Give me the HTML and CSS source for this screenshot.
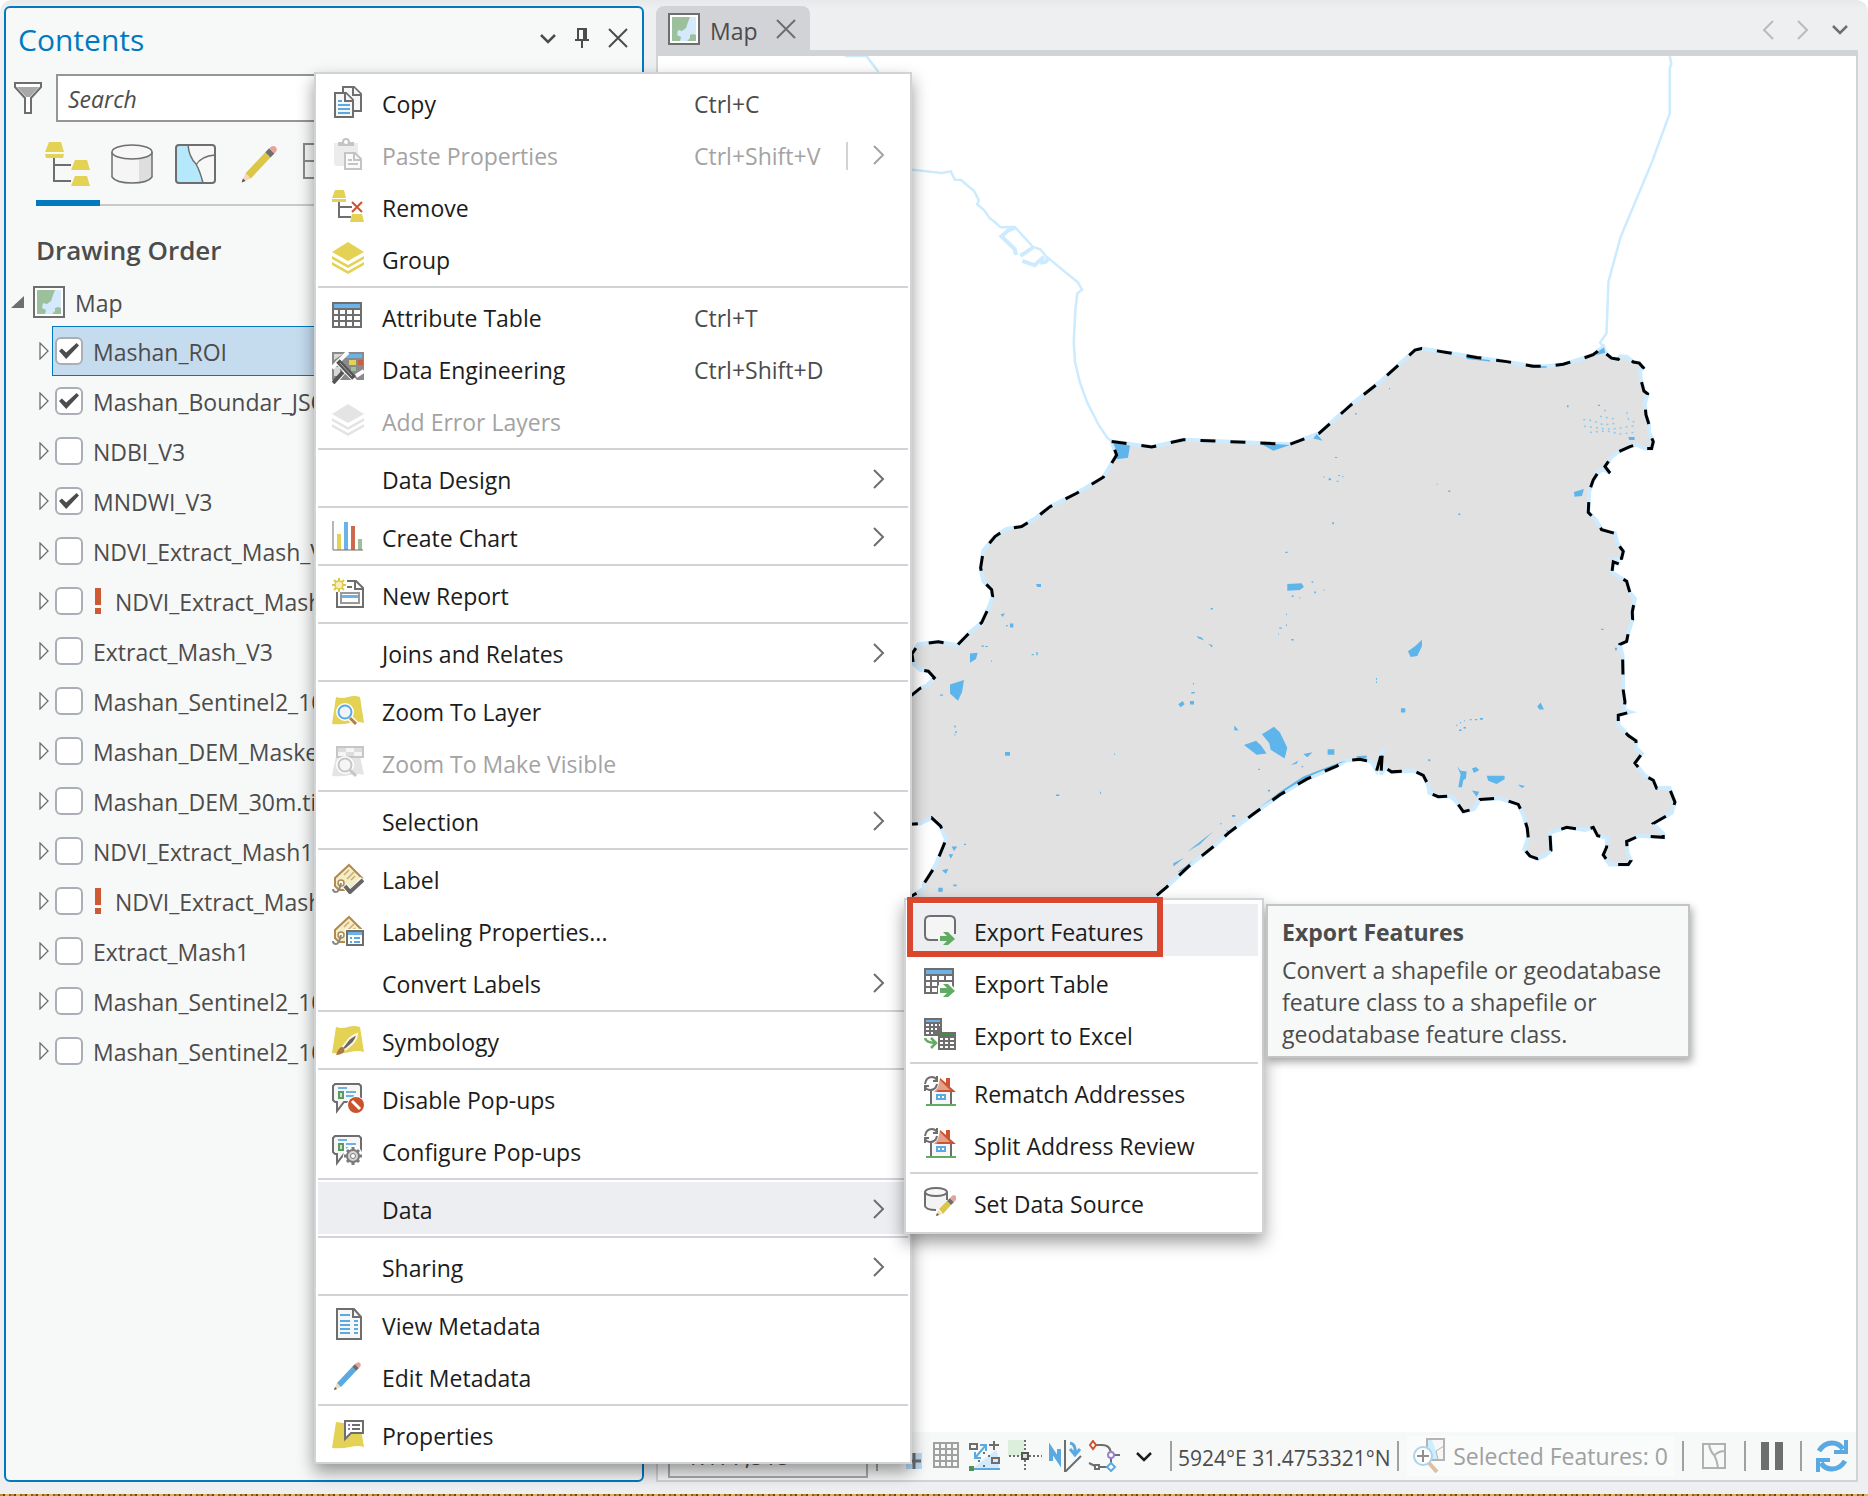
FILE: index.html
```html
<!DOCTYPE html>
<html lang="en">
<head>
<meta charset="utf-8">
<title>Map - Contents</title>
<link rel="stylesheet" href="styles.css">
</head>
<body>
<svg class="sprite" aria-hidden="true">
  <symbol id="chev-right" viewBox="0 0 16 24"><path d="M2 4L11 13L2 22" fill="none" stroke="currentColor" stroke-width="2"/></symbol>
  <symbol id="chev-left" viewBox="0 0 16 24"><path d="M11 4L2 13L11 22" fill="none" stroke="currentColor" stroke-width="2"/></symbol>
  <symbol id="chev-down" viewBox="0 0 20 20"><path d="M3 7L10 14L17 7" fill="none" stroke="currentColor" stroke-width="2.500"/></symbol>
  <symbol id="close" viewBox="0 0 24 24"><path d="M3 3L21 21M21 3L3 21" fill="none" stroke="currentColor" stroke-width="2"/></symbol>
  <symbol id="pin" viewBox="0 0 20 24"><path d="M6 13V3H14V13M3 14H17M10 14V22M12 3V13" fill="none" stroke="currentColor" stroke-width="2"/></symbol>
  <symbol id="map" viewBox="0 0 32 32"><path d="M1 1H31V31H1Z" fill="#fff" stroke="#6e6e6e" stroke-width="2"/><path d="M4 4H28V28H4Z" fill="#9bc09b"/><path d="M22 4H28V22L25 21L22 22V25L19 28H12L13 24L9 22L10 17L14 18L18 15L20 9Z" fill="#d4e9fb"/></symbol>
  <symbol id="expander" viewBox="0 0 12 18"><path d="M1 1V17L9 9Z" fill="#fff" stroke="#6e6e6e" stroke-width="1.3"/></symbol>
  <symbol id="copy" viewBox="0 0 32 32"><g fill="#f7f7f7" stroke="#6e6e6e" stroke-width="2"><path d="M11 1H22L29 8V25H11Z"/><path d="M21 1V9H29"/><path d="M3 7H14L21 14V31H3Z"/><path d="M13 7V15H21"/></g><path d="M6 15H10M6 19H18M6 23H18M6 27H18" stroke="#5aa9e0" stroke-width="2"/></symbol>
  <symbol id="paste" viewBox="0 0 32 32"><path d="M2 5H26V28H4L2 26Z" fill="#ececec"/><path d="M6 4H22V8H6Z" fill="#c4c4c4"/><circle cx="14" cy="4" r="3" fill="#fff" stroke="#c4c4c4" stroke-width="2"/><path d="M13 15H23L29 21V31H13Z" fill="#fafafa" stroke="#c4c4c4" stroke-width="2"/><path d="M22 15V22H29M16 22H20M16 26H26" fill="none" stroke="#c4c4c4" stroke-width="2"/></symbol>
  <symbol id="remove" viewBox="0 0 32 32"><path d="M3 0H12L14 8H0ZM0 9H14V12H0ZM20 24H30L32 32H18Z" fill="#e4d255"/><path d="M7 12V27H19M7 17H20" fill="none" stroke="#6e6e6e" stroke-width="2"/><path d="M20 12L30 22M30 12L20 22" stroke="#cd5430" stroke-width="2"/></symbol>
  <symbol id="layers" viewBox="0 0 32 32"><path d="M16 0L32 10L16 19L0 10ZM0 14L16 23L32 14V17L16 26L0 17ZM0 20L16 29L32 20V23L16 32L0 23Z" fill="currentColor"/></symbol>
  <symbol id="table" viewBox="0 0 32 32"><path d="M0 2H30V28H0Z" fill="#6e6e6e"/><path d="M2 4H28V8H2Z" fill="#6cb2e6"/><path d="M2 10h4v4H2zM8 10h5v4H8zM15 10h5v4h-5zM22 10h6v4h-6zM2 16h4v4H2zM8 16h5v4H8zM15 16h5v4h-5zM22 16h6v4h-6zM2 22h4v4H2zM8 22h5v4H8zM15 22h5v4h-5zM22 22h6v4h-6z" fill="#fff"/></symbol>
  <symbol id="engineering" viewBox="0 0 32 32"><path d="M0 0H32V28H0Z" fill="#8a8a8a"/><path d="M2 2H11L2 8Z" fill="#d8d8d8"/><path d="M13 2H30V6H10Z" fill="#6cb2e6"/><path d="M17 8H24V13H17Z" fill="#e4d255"/><path d="M26 8H31V13H26Z" fill="#cd5f40"/><path d="M19 15H24V19H19Z" fill="#9bc09b"/><path d="M2 15H8V24H2Z" fill="#d8d8d8"/><path d="M16 0L0 16M4 9L24 30M24 24L32 19M2 32L12 20" stroke="#fff" stroke-width="4"/><path d="M6 9L22 26" stroke="#555" stroke-width="5"/><path d="M8 11L20 24" stroke="#aaa" stroke-width="1"/><path d="M1 31L11 20" stroke="#555" stroke-width="4"/></symbol>
  <symbol id="chart" viewBox="0 0 32 32"><path d="M5 14h4v16H5z" fill="#e4d255"/><path d="M12 2h4v28h-4z" fill="#6cb2e6"/><path d="M19 6h4v24h-4z" fill="#cd6a4e"/><path d="M26 19h4v11h-4z" fill="#9bc09b"/><path d="M1 1V30H31" fill="none" stroke="#6e6e6e"/></symbol>
  <symbol id="report" viewBox="0 0 32 32"><path d="M5 14V29H31V10L24 3H15" fill="#fff" stroke="#6e6e6e" stroke-width="2"/><path d="M23 3V11H31M15 9H20" fill="none" stroke="#6e6e6e" stroke-width="2"/><path d="M9 15H27V25H9Z" fill="#fff" stroke="#999" stroke-width="2"/><path d="M10 17H26V20H10Z" fill="#6cb2e6"/><path d="M7 0V14M0 7H14M2 2L12 12M12 2L2 12" stroke="#dcc647" stroke-width="2"/><circle cx="7" cy="7" r="4" fill="#f7efb9" stroke="#dcc647" stroke-width="1.5"/></symbol>
  <symbol id="zoomlayer" viewBox="0 0 32 32"><path d="M4 3Q10 5 16 3T28 3L32 29Q26 27 18 29T0 30Z" fill="#e4d255"/><path d="M18 24L25 31" stroke="#fff" stroke-width="6"/><circle cx="13" cy="18" r="9" fill="#fff"/><circle cx="13" cy="18" r="6.500" fill="#eef4f9" stroke="#5aa9e0" stroke-width="2"/><path d="M18 24L24 30" stroke="#b07d4b" stroke-width="3"/></symbol>
  <symbol id="zoomvisible" viewBox="0 0 32 32"><path d="M4 10L28 10L32 29Q26 27 18 29T0 30Z" fill="#e4e4e4"/><path d="M5 1H31V11H5Z" fill="#f5f5f5" stroke="#c6c6c6" stroke-width="2"/><path d="M6 2h8v4H6zM22 2h8v4h-8zM14 6h8v4h-8z" fill="#ddd"/><circle cx="13" cy="19" r="9" fill="#fff"/><circle cx="13" cy="19" r="6.500" fill="#f5f5f5" stroke="#c6c6c6" stroke-width="2"/><path d="M18 24L24 30" stroke="#c6c6c6" stroke-width="3"/></symbol>
  <symbol id="tag" viewBox="0 0 32 32"><path d="M17 3L30 16L17 28H7L3 24V16Z" fill="#f5edc6" stroke="#b08a50" stroke-width="2"/><path d="M12 13L17 8M15 17L22 10M19 18L23 14" stroke="#cba971" stroke-width="1.500"/><circle cx="9" cy="21" r="3" fill="#fff" stroke="#b08a50" stroke-width="1.500"/><path d="M9 21Q7 30 4 30Q1 30 1 27" fill="none" stroke="#888" stroke-width="2"/></symbol>
  <symbol id="label" viewBox="0 0 32 32"><use href="#tag"/><path d="M13 24L18 30L31 17" fill="none" stroke="#fff" stroke-width="6"/><path d="M13 24L18 30L31 18" fill="none" stroke="#666" stroke-width="4"/></symbol>
  <symbol id="labelprops" viewBox="0 0 32 32"><use href="#tag"/><path d="M13 15H32V32H13Z" fill="#fff"/><path d="M15 17H31V31H15Z" fill="#fff" stroke="#6e6e6e" stroke-width="2"/><path d="M16 18H30V21H16Z" fill="#6cb2e6"/><path d="M18 24H20M22 24H28M18 28H20M22 28H28" stroke="#5aa9e0" stroke-width="2"/></symbol>
  <symbol id="symbology" viewBox="0 0 32 32"><path d="M4 3Q10 5 16 3T28 3L32 28Q26 26 18 28T0 29Z" fill="#e4d255"/><path d="M10 24L17 15Q22 11 25 10Q25 14 21 19L13 26Z" fill="#666" stroke="#fbf6da" stroke-width="2"/><path d="M4 31Q7 22 11 23Q14 26 11 29Q8 31 4 31Z" fill="#a97748"/></symbol>
  <symbol id="bubble" viewBox="0 0 32 32"><path d="M3 2H27L29 4V20H12L5 29V20H3L1 18V4Z" fill="#f7f7f7" stroke="#6e6e6e" stroke-width="2"/><path d="M6 6H15M14 10H24M14 14H22" stroke="#6cb2e6" stroke-width="2"/><path d="M6 9h6v8H6z" fill="#5b9a5b"/><path d="M8 11h2v4H8z" fill="#cfe3cf"/></symbol>
  <symbol id="popoff" viewBox="0 0 32 32"><use href="#bubble"/><circle cx="24" cy="23" r="9" fill="#fff"/><circle cx="24" cy="23" r="8" fill="#c9532d"/><path d="M20 19L28 27" stroke="#fff" stroke-width="3"/></symbol>
  <symbol id="popset" viewBox="0 0 32 32"><use href="#bubble"/><circle cx="21" cy="22" r="10" fill="#fff"/><path d="M21 13V31M12 22H30M15 16L27 28M27 16L15 28" stroke="#7b7b7b" stroke-width="3"/><circle cx="21" cy="22" r="6" fill="#d5d5d5" stroke="#7b7b7b" stroke-width="2"/><circle cx="21" cy="22" r="2.500" fill="#fff" stroke="#7b7b7b"/></symbol>
  <symbol id="viewmeta" viewBox="0 0 32 32"><path d="M5 1H22L29 9V31H5Z" fill="#f7f7f7" stroke="#6e6e6e" stroke-width="2"/><path d="M21 1V9H29" fill="none" stroke="#6e6e6e" stroke-width="2"/><path d="M8 7H18M8 13H18M22 13H26M8 17H18M22 17H26M8 21H18M22 21H26M8 25H18M22 25H26" stroke="#5aa9e0" stroke-width="2"/></symbol>
  <symbol id="pencil" viewBox="0 0 32 32"><path d="M2 30L5 23L9 27Z" fill="#f3d9b8"/><path d="M2 30L3 27L5 29Z" fill="#555"/><path d="M5 23L20 7L24 11L9 27Z" fill="currentColor"/><path d="M20 7L23 4L27 8L24 11Z" fill="#6e6e6e"/><path d="M23 4Q26 1 28 3T27 8Z" fill="#e3a497"/></symbol>
  <symbol id="props" viewBox="0 0 32 32"><path d="M4 4L12 5H28L32 29Q26 27 18 29T0 30Z" fill="#e4d255"/><path d="M13 3H31V15H19L13 21Z" fill="#fff" stroke="#6e6e6e" stroke-width="2"/><path d="M20 7H28M20 11H28" stroke="#6e6e6e" stroke-width="2"/><path d="M16 7H18M16 11H18" stroke="#8a75c9" stroke-width="2"/></symbol>
  <symbol id="arrow" viewBox="0 0 32 32"><path d="M14 20L18 16H25L32 24V32H14Z" fill="#fff"/><path d="M16 22H23L19 18H24L31 25L24 31H19L23 27H16Z" fill="#62ab62"/></symbol>
  <symbol id="exportfeat" viewBox="0 0 32 32"><path d="M14 26H6Q1 26 1 21V7Q1 2 6 2H26Q31 2 31 7V20" fill="#f5f5f5" stroke="#6e6e6e" stroke-width="2"/><path d="M16 22H23L19 18H24L31 25L24 31H19L23 27H16Z" fill="#62ab62"/></symbol>
  <symbol id="exporttable" viewBox="0 0 32 32"><use href="#table"/><use href="#arrow"/></symbol>
  <symbol id="excel" viewBox="0 0 32 32"><path d="M0 0H18V18H0ZM14 14H32V32H14Z" fill="#6e6e6e"/><path d="M2 2H16V4H2Z" fill="#6cb2e6"/><path d="M16 16H30V18H16Z" fill="#3f8f3f"/><path d="M2 6h3v2H2zM7 6h2v2H7zM11 6h2v2h-2zM15 6h1v2h-1zM2 10h3v2H2zM7 10h2v2H7zM11 10h2v2h-2zM2 14h3v2H2zM7 14h2v2H7zM16 20h3v2h-3zM21 20h3v2h-3zM26 20h4v2h-4zM16 24h3v2h-3zM21 24h3v2h-3zM26 24h4v2h-4zM16 28h3v2h-3zM21 28h3v2h-3zM26 28h4v2h-4z" fill="#fff"/><path d="M1 20Q2 25 12 25M7 20L12 25L7 30" fill="none" stroke="#62ab62" stroke-width="2.500"/></symbol>
  <symbol id="house" viewBox="0 0 32 32"><path d="M7 14V29M27 14V29" stroke="#6e6e6e" stroke-width="2"/><path d="M8 14H26V28H8Z" fill="#f7f7f7"/><path d="M2 29H32" stroke="#62ab62" stroke-width="2"/><path d="M12 18H22V24H12Z" fill="#5aa9e0"/><path d="M14 20h2v2h-2zM18 20h2v2h-2z" fill="#fff"/><path d="M16 2L31 16H10L14 11Z" fill="#e3a08c"/><path d="M16 2L22 7V2H26V11L32 16H12L14 14H26L16 4Z" fill="#cd5430"/><path d="M1 8Q2 1 8 1Q11 1 13 4M13 0V5H9M13 8Q12 14 6 14Q3 14 1 11M1 15V10H5" fill="none" stroke="#6e6e6e" stroke-width="2"/></symbol>
  <symbol id="datasource" viewBox="0 0 32 32"><path d="M1 6V20Q1 24 12 24L23 18V6Z" fill="#f3f3f3"/><path d="M1 6V20Q2 24 12 24M23 6V14" fill="none" stroke="#6e6e6e" stroke-width="2"/><ellipse cx="12" cy="6" rx="11" ry="4" fill="#f7f7f7" stroke="#6e6e6e" stroke-width="2"/><path d="M12 30L14 24L18 28Z" fill="#f3d9b8"/><path d="M12 30L13 27L15 29Z" fill="#555"/><path d="M15 23L23 15L27 19L19 28Z" fill="#dcc647"/><path d="M23 15L26 12L30 16L27 19Z" fill="#6e6e6e"/><path d="M26 12L29 9L32 10V14L30 16Z" fill="#e3a497"/></symbol>
  <symbol id="refresh" viewBox="0 0 32 32"><path d="M3 11Q8 3 16 3Q23 3 27 9M29 21Q24 29 16 29Q9 29 5 23" fill="none" stroke="#5aa9e0" stroke-width="5"/><path d="M32 0V14H18V10H28V0ZM0 32V18H14V22H4V32Z" fill="#5aa9e0"/></symbol>
</svg>

<div class="app">
  <section class="contents" aria-label="Contents">
    <header class="contents-head">
      <h1>Contents</h1>
      <button class="tool" aria-label="Options"><svg width="20" height="20"><use href="#chev-down"/></svg></button>
      <button class="tool" aria-label="Pin"><svg width="20" height="24"><use href="#pin"/></svg></button>
      <button class="tool" aria-label="Close"><svg width="24" height="24"><use href="#close"/></svg></button>
    </header>
    <div class="search">
      <svg width="28" height="34" viewBox="0 0 28 34"><path d="M1 2H27V6L17 17V32H11V17L1 6Z" fill="#fff" stroke="#6e6e6e" stroke-width="2"/><path d="M3 6H25L16 16H12Z" fill="#a8a8a8"/></svg>
      <input type="text" placeholder="Search" aria-label="Search">
    </div>
    <nav class="views">
      <button class="view active" aria-label="List by drawing order"><svg width="46" height="46" viewBox="0 0 46 46"><path d="M4 1H16L19 11H0ZM0 13H19L18 17H1ZM30 19H42L45 29H26ZM30 35H42L45 45H26Z" fill="#e4d255"/><path d="M9 17V40H26M9 24H26" fill="none" stroke="#6e6e6e" stroke-width="2"/></svg></button>
      <button class="view" aria-label="List by source"><svg width="42" height="42" viewBox="0 0 42 42"><path d="M1 9V34Q5 40 21 40T41 34V9Z" fill="#f5f5f5"/><path d="M28 14L41 9V34Q38 38 28 39Z" fill="#dedede"/><path d="M1 9V34Q5 40 21 40T41 34V9" fill="none" stroke="#6e6e6e" stroke-width="1.500"/><ellipse cx="21" cy="9" rx="20" ry="7" fill="#f7f7f7" stroke="#6e6e6e" stroke-width="1.500"/></svg></button>
      <button class="view" aria-label="List by selection"><svg width="42" height="42" viewBox="0 0 42 42"><rect x="1" y="2" width="39" height="38" rx="3" fill="#f7f7f7"/><path d="M3 2H13Q14 14 21 21Q25 28 28 40H3L1 38V4Z" fill="#b4e8fa"/><path d="M13 2Q14 14 21 21Q25 28 28 40M21 22Q26 13 40 12" fill="none" stroke="#6e6e6e" stroke-width="1.500"/><rect x="1" y="2" width="39" height="38" rx="3" fill="none" stroke="#6e6e6e" stroke-width="2"/></svg></button>
      <button class="view gold" aria-label="List by editing"><svg width="42" height="42"><use href="#pencil"/></svg></button>
      <button class="view" aria-label="List by snapping"><svg width="42" height="42" viewBox="0 0 42 42"><path d="M1 1H37V35H1ZM1 18H37M19 1V35" fill="none" stroke="#8a8a8a" stroke-width="2"/></svg></button>
    </nav>
    <h2>Drawing Order</h2>
    <div class="root"><svg width="14" height="14" viewBox="0 0 14 14"><path d="M13 1V13H0Z" fill="#6e6e6e"/></svg><svg width="32" height="32"><use href="#map"/></svg><span>Map</span></div>
    <ul class="layers">
      <li><svg class="exp"><use href="#expander"/></svg><label class="layer selected"><input type="checkbox" checked><span>Mashan_ROI</span></label></li>
      <li><svg class="exp"><use href="#expander"/></svg><label class="layer"><input type="checkbox" checked><span>Mashan_Boundar_JSON</span></label></li>
      <li><svg class="exp"><use href="#expander"/></svg><label class="layer"><input type="checkbox"><span>NDBI_V3</span></label></li>
      <li><svg class="exp"><use href="#expander"/></svg><label class="layer"><input type="checkbox" checked><span>MNDWI_V3</span></label></li>
      <li><svg class="exp"><use href="#expander"/></svg><label class="layer"><input type="checkbox"><span>NDVI_Extract_Mash_V3</span></label></li>
      <li><svg class="exp"><use href="#expander"/></svg><label class="layer"><input type="checkbox"><i class="bang"></i><span>NDVI_Extract_Mash</span></label></li>
      <li><svg class="exp"><use href="#expander"/></svg><label class="layer"><input type="checkbox"><span>Extract_Mash_V3</span></label></li>
      <li><svg class="exp"><use href="#expander"/></svg><label class="layer"><input type="checkbox"><span>Mashan_Sentinel2_10m</span></label></li>
      <li><svg class="exp"><use href="#expander"/></svg><label class="layer"><input type="checkbox"><span>Mashan_DEM_Masked</span></label></li>
      <li><svg class="exp"><use href="#expander"/></svg><label class="layer"><input type="checkbox"><span>Mashan_DEM_30m.tif</span></label></li>
      <li><svg class="exp"><use href="#expander"/></svg><label class="layer"><input type="checkbox"><span>NDVI_Extract_Mash1.tif</span></label></li>
      <li><svg class="exp"><use href="#expander"/></svg><label class="layer"><input type="checkbox"><i class="bang"></i><span>NDVI_Extract_Mash</span></label></li>
      <li><svg class="exp"><use href="#expander"/></svg><label class="layer"><input type="checkbox"><span>Extract_Mash1</span></label></li>
      <li><svg class="exp"><use href="#expander"/></svg><label class="layer"><input type="checkbox"><span>Mashan_Sentinel2_10m</span></label></li>
      <li><svg class="exp"><use href="#expander"/></svg><label class="layer"><input type="checkbox"><span>Mashan_Sentinel2_10m</span></label></li>
    </ul>
  </section>

  <main class="pane">
    <div class="tabs">
      <div class="tab"><svg width="32" height="32"><use href="#map"/></svg><span>Map</span><button class="tool dim" aria-label="Close map"><svg width="24" height="24"><use href="#close"/></svg></button></div>
      <button class="tool faint" aria-label="Previous"><svg width="16" height="24"><use href="#chev-left"/></svg></button>
      <button class="tool faint" aria-label="Next"><svg width="16" height="24"><use href="#chev-right"/></svg></button>
      <button class="tool dim" aria-label="Tab list"><svg width="20" height="20"><use href="#chev-down"/></svg></button>
    </div>
    <div class="view-frame">
      <svg class="canvas" viewBox="658 56 1198 1376" preserveAspectRatio="xMinYMin slice">
        <defs>
          <path id="edge" vector-effect="non-scaling-stroke" d="M635 370L755 384L850 365L1170 377L1258 348L1330 292L1365 265L1440 214L1545 131L1565 127L1590 130L1640 137L1730 150L1820 161L1900 173H1940L1990 168L2050 152L2080 143L2110 122L2118 140L2135 152L2155 155L2162 147L2180 148L2200 162L2218 165L2230 177L2220 185L2222 205L2232 238L2243 245L2235 270L2238 300L2247 325V345L2260 370L2255 388H2235L2210 378L2190 383L2155 397L2135 410L2115 435L2130 452L2110 442L2095 450L2080 470L2068 500L2065 555L2090 577L2105 600L2145 610L2152 635L2170 657L2165 675L2140 678L2158 690L2140 684L2136 712L2180 735L2190 765L2205 780L2197 815L2198 835L2185 870L2180 892L2160 900L2168 930L2170 1020L2175 1050L2172 1072L2190 1077L2155 1085V1110L2185 1138L2208 1152V1170L2226 1185L2205 1210L2235 1243L2260 1255L2270 1276L2308 1275L2325 1312L2315 1340L2260 1368L2290 1395V1404L2218 1400L2180 1415L2183 1445L2193 1465L2185 1475H2130L2110 1450L2120 1430L2122 1405L2093 1400L2080 1378L2055 1385L2000 1378L1950 1392L1953 1438L1935 1452L1912 1460L1890 1453L1873 1435L1885 1405L1882 1380L1870 1345L1855 1318L1800 1302L1740 1305L1722 1330L1690 1337L1668 1310L1650 1296L1615 1298L1588 1288L1585 1268L1570 1242L1540 1230L1475 1233L1455 1222L1443 1240L1448 1172L1440 1200L1430 1230L1415 1207L1380 1200L1340 1203L1310 1218L1220 1252L1140 1293L1060 1343L985 1393L945 1425L870 1477L800 1534L765 1560L690 1640H30V1560L70 1540L72 1525L105 1480L138 1410L122 1375L95 1353L60 1368L30 1370L0 1360V1040L36 1032L60 1015L80 1008L103 987L85 970L60 966L40 950L36 925L55 900L115 893L172 902L210 868L245 843L268 800L278 775L275 757L250 735L242 700L250 655L285 618L320 598L365 592L410 568L450 540L530 505L610 463L650 405Z"/>
        </defs>
        <g fill="none" stroke="#cdebff" stroke-width="2.500">
          <g transform="translate(640 0) scale(.3954 .3333)">
            <path vector-effect="non-scaling-stroke" d="M518 168H573L603 216M640 480L688 509L762 519L786 514L796 539L812 540L845 573L857 601L853 613L870 630L884 654L895 664L912 682L948 681L994 741L1012 748L1028 770L1108 848L1118 869L1106 880L1101 930L1097 1025L1100 1085L1112 1145L1130 1205L1160 1275L1182 1314L1192 1322"/>
            <path vector-effect="non-scaling-stroke" stroke-width="4" d="M948 684L930 692L914 709L948 748L951 765M994 742L962 768M967 783L998 796L1022 770M1012 788L1026 786L1034 772"/>
          </g>
          <path vector-effect="non-scaling-stroke" transform="translate(1240 0) scale(.4005 .3333)" d="M1073 168L1077 192L1073 205V340L1030 482L950 712L920 845L915 1000L899 1028L906 1038"/>
        </g>
        <g transform="translate(900 300) scale(.3333 .3827)">
          <use href="#edge" class="land"/>
          <use href="#edge" class="coast"/>
          <g fill="#5db5ec">
            <path d="M640 374L690 380L684 412L650 416L652 400ZM1080 374L1170 379L1120 394L1108 388ZM1250 350L1268 368L1240 362ZM1162 742L1205 740L1212 750L1200 758L1162 760ZM408 742H423V750H412ZM210 924L233 922L228 938L210 948ZM150 1005L192 993L186 1025L174 1047L150 1028ZM835 1056L848 1048L854 1056L842 1064ZM870 1048H882V1057H870ZM315 1181H330V1191H315ZM1003 1112L1016 1124L1003 1125ZM1032 1163L1068 1152L1084 1165L1100 1185L1070 1188ZM1086 1135L1122 1115L1140 1130L1162 1170L1154 1198L1112 1175L1108 1158ZM1173 1215L1195 1203L1190 1212ZM1210 1186L1238 1182L1222 1195ZM1283 1174H1303V1188H1283ZM1076 1328L1140 1285L1210 1245L1320 1208L1340 1203L1220 1248L1140 1290ZM820 1472L852 1458L820 1480ZM862 1442L940 1388L900 1422ZM832 1495L878 1466L850 1490ZM155 1428H172L162 1440ZM146 1448H160L152 1460ZM126 1490L145 1486L138 1500ZM115 1536H128V1546H115ZM302 822L315 818L308 828ZM330 845H340V856H330ZM890 878L905 882L912 890L895 884ZM925 898L938 902L936 908ZM1370 1192L1400 1190V1198H1370Z"/>
            <path d="M1524 918L1545 905L1566 888V905L1552 930L1532 933ZM2022 502L2052 494L2046 512L2024 514ZM1672 1218L1682 1230L1700 1232L1698 1250L1690 1255L1686 1273H1675L1682 1240ZM1716 1224L1728 1220L1738 1228L1722 1236ZM1760 1243H1814V1252L1790 1265L1765 1256ZM1716 1282L1738 1285L1730 1298ZM1854 1266L1875 1270L1866 1275ZM1503 1067H1516V1078H1503ZM1912 1062L1922 1052L1932 1070H1918ZM2085 140L2112 124L2116 138L2092 143ZM2185 358H2204V366H2188ZM1700 150L1770 157V161L1700 154ZM1890 173H1940V177H1890Z"/>
            <path d="M1305 410h7v3h-7zM1270 461h4v3h-4zM1286 466h7v5h-7zM1315 457h5v3h-5zM1327 460h3v3h-3zM1310 472h6v3h-6zM1297 581h5v5h-5zM1156 658h7v3h-7zM1235 735h5v4h-5zM1243 762h5v4h-5zM1270 757h3v3h-3zM1175 772h6v4h-6zM1198 777h3v3h-3zM932 805h7v4h-7zM1158 820h3v3h-3zM1158 848h3v4h-3zM1138 856h7v3h-7zM1134 872h3v3h-3zM1174 886h7v4h-7zM395 925h6v3h-6zM409 920h4v8h-4zM318 849h5v4h-5zM244 903h8v3h-8zM256 904h8v3h-8zM273 942h3v3h-3zM120 1031h9v3h-9zM163 1112h4v5h-4zM166 1126h4v6h-4zM163 1135h3v3h-3zM879 1001h3v4h-3zM874 1024h10v4h-10zM642 1185h3v3h-3zM600 1285h3v5h-3zM468 1292h10v4h-10zM1104 1280h6v4h-6zM996 1346h10v4h-10zM960 1367h5v3h-5zM980 1385h4v4h-4zM192 1421h6v3h-6zM160 1527h10v5h-10zM1075 1225h5v3h-5zM1204 1218h6v3h-6z"/>
            <path d="M1467 230h3v3h-3zM1365 295h5v4h-5zM1610 480h3v3h-3zM1645 498h6v4h-6zM1675 558h6v4h-6zM2001 275h5v5h-5zM2094 274h6v3h-6zM2104 859h7v3h-7zM2145 909h6v6h-6zM1428 988h3v4h-3zM1428 997h3v4h-3zM1585 1200h6v5h-6zM1669 1110h3v3h-3zM1680 1103h3v3h-3zM1692 1098h3v3h-3zM1677 1122h8v4h-8zM1691 1116h7v4h-7zM1710 1095h5v3h-5zM1725 1095h7v3h-7zM1740 1092h9v5h-9z"/>
          </g>
          <path d="M2050 312L2080 316L2110 326L2150 322M2052 330L2090 334L2130 338L2210 328M2070 346L2120 342L2160 350L2205 346M2100 304L2150 312M2112 289H2126M2180 293L2186 312L2210 322" fill="none" stroke="#8cc8ef" stroke-width="1.500" stroke-dasharray="2 4" vector-effect="non-scaling-stroke"/>
          <use href="#edge" class="border"/>
        </g>
      </svg>
      <footer class="status">
        <input class="scale" type="text" value="1:177,515" aria-label="Map scale">
        <i class="rule"></i>
        <div class="icons">
          <svg width="32" height="32" viewBox="0 0 32 32"><path d="M14 13H30V29H14Z" fill="#b9daf4"/><path d="M22 13V29M16 21H29" stroke="#6e6e6e" stroke-width="3"/></svg>
          <svg width="32" height="32" viewBox="0 0 32 32"><path d="M4 3H28V27H4ZM10 3V27M16 3V27M22 3V27M4 9H28M4 15H28M4 21H28" fill="none" stroke="#a0a0a0" stroke-width="2"/></svg>
          <svg width="34" height="32" viewBox="0 0 34 32"><path d="M4 29L28 10L31 18V29Z" fill="#d4e9fb"/><path d="M7 18L18 5M7 12V18H13M12 5H18V11M6 29H32" fill="none" stroke="#5aa9e0" stroke-width="2"/><path d="M2 4H9V9H2ZM24 18H31V23H24ZM26 1V10M21 5H31" fill="none" stroke="#6e6e6e" stroke-width="2"/><path d="M15 12h2v2h-2zM20 15h2v2h-2zM10 20h2v2h-2zM15 25h2v2h-2z" fill="#6e6e6e"/><path d="M1 26h5v5H1z" fill="#4f9152"/></svg>
          <svg width="34" height="32" viewBox="0 0 34 32"><path d="M0 0H16V16H0Z" fill="#dcefdc"/><path d="M17 0V32M1 16H34" stroke="#6e6e6e" stroke-width="2" stroke-dasharray="2 2"/><path d="M14 13H20V19H14Z" fill="#ddd" stroke="#555" stroke-width="2"/></svg>
          <svg width="34" height="32" viewBox="0 0 34 32"><path d="M3 21V9L11 21V9" fill="none" stroke="#5aa9e0" stroke-width="4"/><path d="M17 0V32L33 16" fill="none" stroke="#6e6e6e" stroke-width="2"/><path d="M22 3Q28 4 27 13M22 9L27 15L32 9" fill="none" stroke="#5aa9e0" stroke-width="3"/></svg>
          <svg width="34" height="32" viewBox="0 0 34 32"><path d="M5 5H14Q23 5 23 15V26M32 15H23M23 27H9L1 23" fill="none" stroke="#6e6e6e" stroke-width="2"/><path d="M5 1L8 5L5 9L2 5Z" fill="#fff" stroke="#cd5430" stroke-width="2"/><circle cx="23" cy="15" r="3" fill="#fff" stroke="#9a83cc" stroke-width="2"/><path d="M23 23L27 27L23 31L19 27Z" fill="#fff" stroke="#5aa9e0" stroke-width="2"/><path d="M7 25h4v4H7z" fill="#fff" stroke="#6e6e6e" stroke-width="2"/></svg>
        </div>
        <button class="tool dark" aria-label="More snapping"><svg width="20" height="20"><use href="#chev-down"/></svg></button>
        <i class="rule"></i>
        <span class="coords">5924°E 31.4753321°N</span>
        <i class="rule"></i>
        <button class="picked" disabled><svg width="34" height="38" viewBox="0 0 34 38"><path d="M14 2H31V23H14Z" fill="#f7f7f7" stroke="#b4b4b4" stroke-width="2"/><path d="M15 3H19L23 14L25 22H15Z" fill="#cdeefa"/><path d="M23 14L31 9M23 14L25 22" stroke="#b4b4b4"/><circle cx="10" cy="19" r="9" fill="#fff" stroke="#a9d3ef" stroke-width="2"/><path d="M10 13V25M4 19H16" stroke="#909090" stroke-width="2"/><path d="M16 26L24 35" stroke="#dcc0a4" stroke-width="4"/></svg><span>Selected Features: 0</span></button>
        <i class="rule"></i>
        <svg class="mid" width="24" height="26" viewBox="0 0 24 26"><path d="M1 1H23V25H1ZM7 1Q8 8 12 12Q15 17 16 25M12 13Q16 8 23 8" fill="none" stroke="#b0b0b0" stroke-width="2"/></svg>
        <i class="rule"></i>
        <button class="tool" aria-label="Pause drawing"><svg width="24" height="28" viewBox="0 0 24 28"><path d="M1 0H9V28H1ZM15 0H23V28H15Z" fill="#6e6e6e"/></svg></button>
        <i class="rule"></i>
        <button class="tool" aria-label="Refresh"><svg width="32" height="32"><use href="#refresh"/></svg></button>
      </footer>
    </div>
  </main>
</div>
<div class="desktop"></div>

<div class="menu main-menu" role="menu">
  <button class="item"><svg class="ico"><use href="#copy"/></svg><span>Copy</span><kbd>Ctrl+C</kbd></button>
  <button class="item" disabled><svg class="ico"><use href="#paste"/></svg><span>Paste Properties</span><kbd class="split">Ctrl+Shift+V</kbd><svg class="more"><use href="#chev-right"/></svg></button>
  <button class="item"><svg class="ico"><use href="#remove"/></svg><span>Remove</span></button>
  <button class="item"><svg class="ico yellow"><use href="#layers"/></svg><span>Group</span></button>
  <hr>
  <button class="item"><svg class="ico"><use href="#table"/></svg><span>Attribute Table</span><kbd>Ctrl+T</kbd></button>
  <button class="item"><svg class="ico"><use href="#engineering"/></svg><span>Data Engineering</span><kbd>Ctrl+Shift+D</kbd></button>
  <button class="item" disabled><svg class="ico pale"><use href="#layers"/></svg><span>Add Error Layers</span></button>
  <hr>
  <button class="item"><span>Data Design</span><svg class="more"><use href="#chev-right"/></svg></button>
  <hr>
  <button class="item"><svg class="ico"><use href="#chart"/></svg><span>Create Chart</span><svg class="more"><use href="#chev-right"/></svg></button>
  <hr>
  <button class="item"><svg class="ico"><use href="#report"/></svg><span>New Report</span></button>
  <hr>
  <button class="item"><span>Joins and Relates</span><svg class="more"><use href="#chev-right"/></svg></button>
  <hr>
  <button class="item"><svg class="ico"><use href="#zoomlayer"/></svg><span>Zoom To Layer</span></button>
  <button class="item" disabled><svg class="ico"><use href="#zoomvisible"/></svg><span>Zoom To Make Visible</span></button>
  <hr>
  <button class="item"><span>Selection</span><svg class="more"><use href="#chev-right"/></svg></button>
  <hr>
  <button class="item"><svg class="ico"><use href="#label"/></svg><span>Label</span></button>
  <button class="item"><svg class="ico"><use href="#labelprops"/></svg><span>Labeling Properties...</span></button>
  <button class="item"><span>Convert Labels</span><svg class="more"><use href="#chev-right"/></svg></button>
  <hr>
  <button class="item"><svg class="ico"><use href="#symbology"/></svg><span>Symbology</span></button>
  <hr>
  <button class="item"><svg class="ico"><use href="#popoff"/></svg><span>Disable Pop-ups</span></button>
  <button class="item"><svg class="ico"><use href="#popset"/></svg><span>Configure Pop-ups</span></button>
  <hr>
  <button class="item hot"><span>Data</span><svg class="more"><use href="#chev-right"/></svg></button>
  <hr>
  <button class="item"><span>Sharing</span><svg class="more"><use href="#chev-right"/></svg></button>
  <hr>
  <button class="item"><svg class="ico"><use href="#viewmeta"/></svg><span>View Metadata</span></button>
  <button class="item"><svg class="ico blue"><use href="#pencil"/></svg><span>Edit Metadata</span></button>
  <hr>
  <button class="item"><svg class="ico"><use href="#props"/></svg><span>Properties</span></button>
</div>

<div class="menu sub-menu" role="menu">
  <button class="item hot"><svg class="ico"><use href="#exportfeat"/></svg><span>Export Features</span></button>
  <button class="item"><svg class="ico"><use href="#exporttable"/></svg><span>Export Table</span></button>
  <button class="item"><svg class="ico"><use href="#excel"/></svg><span>Export to Excel</span></button>
  <hr>
  <button class="item"><svg class="ico"><use href="#house"/></svg><span>Rematch Addresses</span></button>
  <button class="item"><svg class="ico"><use href="#house"/></svg><span>Split Address Review</span></button>
  <hr>
  <button class="item"><svg class="ico"><use href="#datasource"/></svg><span>Set Data Source</span></button>
</div>
<div class="marker"></div>

<div class="tooltip" role="tooltip">
  <strong>Export Features</strong>
  <p>Convert a shapefile or geodatabase feature class to a shapefile or geodatabase feature class.</p>
</div>
</body>
</html>
```
FILE: styles.css
```css
* { box-sizing: border-box; }
html { background: #fff; }
body {
  margin: 0;
  min-height: 100vh;
  display: flex;
  flex-direction: column;
  position: relative;
  overflow: hidden;
  font-family: "Open Sans", "Noto Sans", sans-serif;
  font-size: 23px;
  line-height: 32px;
  color: #4c4c4c;
}
h1, h2, p, ul { margin: 0; padding: 0; }
button, input { font: inherit; color: inherit; }
button { border: 0; background: none; padding: 0; text-align: left; }
svg { display: block; flex: none; }
.sprite { position: absolute; width: 0; height: 0; }

.app {
  flex: 1;
  display: grid;
  grid-template-columns: 640px 1fr;
  gap: 12px;
  padding: 6px 10px 12px 4px;
  background: linear-gradient(#e6e8ea, #edeff1 8px);
  border-radius: 12px 12px 0 0;
}
.desktop {
  height: 2px;
  background: repeating-linear-gradient(90deg, #c98a2b 0 3px, #6b4318 3px 5px, #e0b45a 5px 9px, #8a5a1c 9px 11px);
}
.tool { display: grid; place-items: center; color: #4c4c4c; }
.dim { color: #6e6e6e; }
.faint { color: #b9bbbf; }
.dark { color: #1c1c1c; }

/* Contents pane */
.contents {
  border: 2px solid #0079c1;
  border-radius: 6px;
  background: #f7f9f8;
  overflow: hidden;
}
.contents-head {
  display: flex;
  align-items: center;
  gap: 14px;
  height: 60px;
  padding: 0 12px;
}
.contents-head h1 {
  flex: 1;
  padding-top: 4px;
  font-size: 30px;
  font-weight: 400;
  color: #0079c1;
}
.search { display: flex; align-items: center; gap: 14px; padding: 6px 8px 0; }
.search input {
  flex: 1;
  height: 48px;
  padding: 2px 10px 0;
  border: 2px solid #959595;
  background: #fff;
}
.search input::placeholder { color: #4c4c4c; opacity: 1; font-style: italic; }
.views {
  display: flex;
  margin: 12px 30px 0;
  border-bottom: 2px solid #c9c9c9;
}
.view { display: grid; place-items: center; width: 64px; height: 72px; padding-bottom: 12px; margin-bottom: -2px; }
.view.active { border-bottom: 6px solid #0079c1; padding-bottom: 6px; }
.gold { color: #dcc647; }
.contents h2 { padding: 26px 30px 0; font-size: 26px; font-weight: 600; line-height: 36px; }
.root { display: flex; align-items: center; gap: 10px; height: 48px; margin-top: 10px; padding-left: 5px; }
.root svg + svg { margin-left: -2px; }
.layers { list-style: none; }
.layers li { display: flex; align-items: center; height: 50px; padding-left: 33px; }
.exp { width: 12px; height: 18px; margin-right: 1px; }
.layer {
  flex: 1;
  display: flex;
  align-items: center;
  gap: 10px;
  height: 50px;
  padding-left: 2px;
  border: 1px solid transparent;
  white-space: nowrap;
}
.layer.selected { background: #c5dcee; border-color: #0079c1; }
.layer span, .root span { padding-top: 2px; }
.layer input {
  appearance: none;
  width: 28px;
  height: 28px;
  margin: 0;
  border: 2px solid #abaeb4;
  border-radius: 6px;
  background: #fff;
  display: grid;
  place-items: center;
}
.layer input:checked::before {
  content: "";
  width: 20px;
  height: 16px;
  background: #4c4c4c;
  clip-path: polygon(0 50%, 14% 34%, 36% 60%, 88% 0, 100% 16%, 36% 100%);
}
.bang {
  width: 6px;
  height: 26px;
  margin: 0 4px 0 2px;
  background: linear-gradient(#cd5a33 0 17px, transparent 17px 20px, #cd5a33 20px);
}

/* Map pane */
.pane { display: flex; flex-direction: column; min-width: 0; }
.tabs {
  display: flex;
  align-items: center;
  gap: 18px;
  height: 50px;
  padding-right: 8px;
  border-bottom: 6px solid #d2d3d7;
}
.tabs > .tool { padding-top: 2px; }
.tab {
  display: flex;
  align-items: center;
  gap: 10px;
  height: 44px;
  margin-right: auto;
  padding: 2px 12px 0;
  border-radius: 8px 8px 0 0;
  background: #d2d3d7;
}
.tab span { padding-top: 4px; }
.tab .tool { margin-left: 6px; }
.view-frame {
  flex: 1;
  display: flex;
  flex-direction: column;
  border: 2px solid #d2d3d7;
  border-top: 0;
  background: #fff;
}
.canvas { flex: 1 1 0; min-height: 0; width: 100%; }
.land { fill: #e1e1e1; }
.coast { fill: none; stroke: #cdebff; stroke-width: 4; }
.border { fill: none; stroke: #000; stroke-width: 3; stroke-dasharray: 15 15; }

.status {
  display: flex;
  align-items: center;
  height: 48px;
  padding: 0 8px 0 10px;
  background: #f7f9f8;
  white-space: nowrap;
}
.scale { width: 200px; height: 44px; padding: 0 16px; border: 2px solid #a9acb0; background: #f7f9f8; }
.rule { flex: none; width: 2px; height: 30px; background: #a0a0a0; }
.status > .rule:nth-of-type(1) { margin-left: 8px; }
.icons { display: flex; gap: 6px; margin: 0 12px 0 14px; }
.status .tool + .rule { margin-left: 16px; }
.coords { flex: 1; margin: 0 2px 0 6px; padding-top: 4px; font-size: 21px; }
.picked {
  display: flex;
  align-items: center;
  gap: 6px;
  height: 40px;
  margin: 0 8px;
  padding: 0 6px;
  background: #fafbfb;
  color: #a0a0a0;
}
.mid { margin: 0 18px; }
.rule + .tool { margin-left: 14px; }

/* Menus */
.menu {
  position: absolute;
  border: 2px solid #d2d3d7;
  background: #fff;
  box-shadow: 0 8px 16px rgba(0, 0, 0, .4);
  color: #1c1c1c;
}
.main-menu { left: 314px; top: 72px; width: 598px; padding: 2px; }
.sub-menu { left: 904px; top: 898px; width: 360px; padding: 4px; }
.item {
  display: grid;
  grid-template-columns: 32px 294px 1fr 16px;
  column-gap: 18px;
  align-items: center;
  width: 100%;
  height: 52px;
  padding: 0 20px 0 14px;
  white-space: nowrap;
}
.sub-menu .item { grid-template-columns: 32px 1fr; }
.item span { grid-column: 2; padding-top: 3px; }
.item kbd { font: inherit; color: #4c4c4c; padding-top: 3px; }
.item:disabled, .item:disabled kbd { color: #a3a3a3; }
.item .split { display: flex; align-items: center; gap: 26px; }
.split::after { content: ""; width: 2px; height: 28px; background: #d2d3d7; }
.item.hot { background: #edeef1; }
.menu hr { height: 2px; margin: 2px 0; border: 0; background: #d2d3d7; }
.ico { width: 32px; height: 32px; }
.more { grid-column: 4; width: 16px; height: 24px; color: #6e6e6e; }
.item:disabled .more { color: #a3a3a3; }
.yellow { color: #e4d255; }
.pale { color: #e4e4e4; }
.blue { color: #5aa9e0; }
.marker {
  position: absolute;
  left: 907px;
  top: 897px;
  width: 256px;
  height: 60px;
  border: 6px solid #d9472e;
  pointer-events: none;
}
.tooltip {
  position: absolute;
  left: 1266px;
  top: 904px;
  width: 424px;
  padding: 10px 14px 6px;
  border: 2px solid #c3c4c8;
  background: #f7f9f8;
  box-shadow: 2px 4px 8px rgba(0, 0, 0, .35);
}
.tooltip strong { display: block; margin-bottom: 6px; font-weight: 700; }
```
